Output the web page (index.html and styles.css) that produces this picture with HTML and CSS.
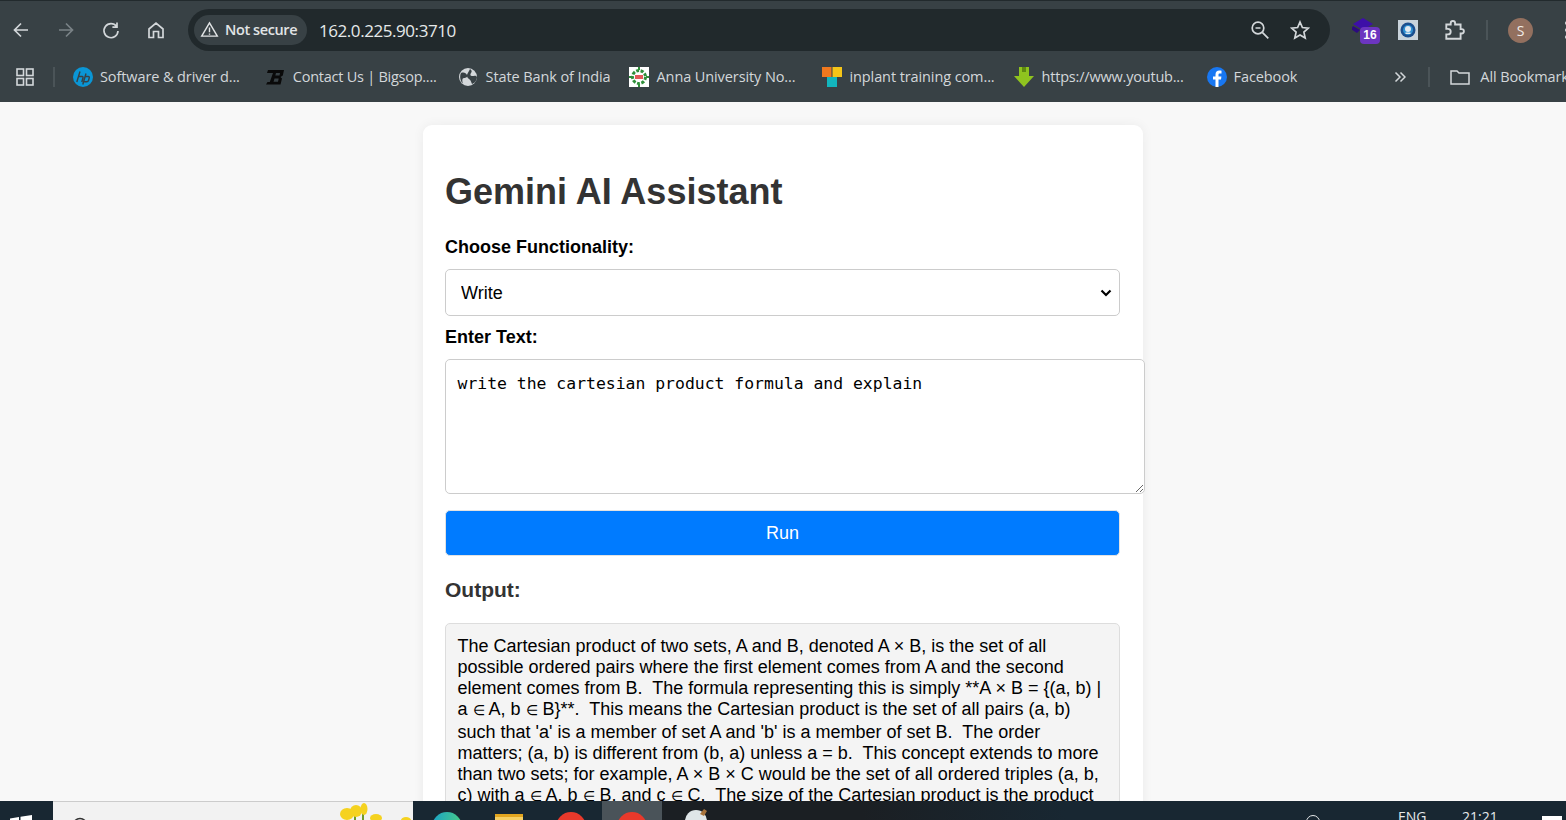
FILE: index.html
```html
<!DOCTYPE html>
<html lang="en">
<head>
<meta charset="utf-8">
<title>Gemini AI Assistant</title>
<link rel="stylesheet" href="styles.css">
</head>
<body>
<header class="browser">
  <div class="toolbar">
    <div class="nav">
      <svg class="ico" viewBox="0 0 20 20"><path d="M17 10H4M10 3.500 3.500 10l6.500 6.500"/></svg>
      <svg class="ico dim" viewBox="0 0 20 20"><path d="M3 10h13M10 3.500l6.500 6.500-6.500 6.500"/></svg>
      <svg class="ico" viewBox="0 0 20 20"><path d="M15.600 6.500A7 7 0 1 0 17 11M16 2.500v4.600h-4.600"/></svg>
      <svg class="ico" viewBox="0 0 20 20"><path d="M3 9 10 3l7 6v8.500h-4.500v-6h-5v6H3z"/></svg>
    </div>
    <div class="omnibox">
      <div class="chip">
        <svg class="warn" viewBox="0 0 20 20"><path d="M10 3 1.800 17h16.400zM10 8v5M10 14.300v1.200"/></svg>
        <span>Not secure</span>
      </div>
      <span class="url">162.0.225.90:3710</span>
      <svg class="ico zoomi" viewBox="0 0 20 20"><circle cx="8" cy="8" r="5.800"/><path d="M5.500 8h5M12.300 12.300l6 6"/></svg>
      <svg class="ico star" viewBox="0 0 20 20"><path d="m10 2 2.400 5.500 6 .6-4.500 4 1.300 5.900L10 15l-5.200 3 1.300-5.900-4.500-4 6-.6z"/></svg>
    </div>
    <div class="actions">
      <div class="ext-stack">
        <svg class="ext-hat" viewBox="0 0 22 18"><path d="M11 0 21 6l-10 6L1 6z" fill="#3d0fa8"/><path d="M1 8l7 4-3 3-6-4z" fill="#2c0a80"/></svg>
        <span class="ext-badge">16</span>
      </div>
      <div class="ext-sq"><svg viewBox="0 0 20 20"><rect width="20" height="20" fill="#c9d3db"/><circle cx="10" cy="10" r="7.500" fill="#1b4f8f"/><circle cx="10" cy="10" r="5" fill="#2f8fd0"/><circle cx="10" cy="9" r="3" fill="#e2e9f0"/><path d="M7.500 12.500h5V14h-5z" fill="#e2e9f0"/></svg></div>
      <svg class="ico puzzle" viewBox="0 0 20 20"><path d="M3 5h4V3.800a2 2 0 0 1 4 0V5h5v4.200h1a2 2 0 0 1 0 4h-1V18H3v-4h1.500a2 2 0 0 0 0-5H3z"/></svg>
      <span class="vsep"></span>
      <span class="avatar">S</span>
      <span class="dots"><i></i><i></i><i></i></span>
    </div>
  </div>
  <nav class="bookmarks">
    <svg class="apps" viewBox="0 0 20 20"><rect x="2" y="2" width="6.500" height="6.500"/><rect x="11.500" y="2" width="6.500" height="6.500"/><rect x="2" y="11.500" width="6.500" height="6.500"/><rect x="11.500" y="11.500" width="6.500" height="6.500"/></svg>
    <span class="vsep first"></span>
    <a class="bm b-hp"><svg viewBox="0 0 20 20"><circle cx="10" cy="10" r="10" fill="#0a96d6"/><path d="M7 4.500 3.800 15M6 9.500h3.200c.8 0 1 .5.800 1.200L8.800 15M13 6.500 9.800 17.500M12.200 9.500h3c1 0 1.300.6 1 1.500l-.7 2.500c-.3.900-.8 1.300-1.700 1.300h-2.500" fill="none" stroke="#384145" stroke-width="1.400"/></svg><span>Software &amp; driver d...</span></a>
    <a class="bm b-big"><svg viewBox="0 0 20 20"><path d="M3 3h16l-1.200 5.500-2.300 1.500 1.500 1.500-1.500 6H1l1.500-2.500h2.300L8 6H2z" fill="#0a0a0a"/><path d="M11 6h4l-.5 2.500h-4.200zM9.500 11.500h4.200l-.7 3.200H8.500z" fill="#384145"/></svg><span>Contact Us | Bigsop....</span></a>
    <a class="bm b-sbi"><svg viewBox="0 0 20 20"><circle cx="10" cy="10" r="9" fill="#d3d7da"/><path d="M3 6c3-1 5 0 6 2s-1 3-3 3-2 3-1 6c-2-2-4-7-2-11zM12 2c2 1 2 3 1 4s-1 3 1 3 4-1 5 1c0 3-2 6-5 7-1-2-1-4-3-5s-2-3-2-4 2-4 3-6z" fill="#384145"/></svg><span>State Bank of India</span></a>
    <a class="bm b-anna"><svg viewBox="0 0 20 20"><rect width="20" height="20" fill="#fff"/><circle cx="10" cy="10" r="6.500" fill="none" stroke="#2f8f3a" stroke-width="3" stroke-dasharray="3 1.500"/><rect x="6" y="8" width="8" height="4" fill="#e25a5a"/><path d="M10 0v3M10 17v3M0 10h3M17 10h3" stroke="#2f8f3a" stroke-width="2"/></svg><span>Anna University No...</span></a>
    <a class="bm b-ipt"><svg viewBox="0 0 20 20"><rect width="9.500" height="10" fill="#f0781e"/><rect x="10.500" width="9.500" height="10" fill="#f5c518"/><rect x="5" y="10" width="10" height="10" fill="#12b5bd"/></svg><span>inplant training com...</span></a>
    <a class="bm b-yt"><svg viewBox="0 0 20 20"><path d="M5 0h10v9h5L10 20 0 9h5z" fill="#8fc31f"/><path d="M8 0h4v5H8z" fill="#5f8a10"/></svg><span>https://www.youtub...</span></a>
    <a class="bm b-fb"><svg viewBox="0 0 20 20"><circle cx="10" cy="10" r="10" fill="#1877f2"/><path d="M11.500 20v-7.500H14l.4-3h-2.900V7.800c0-.9.3-1.400 1.500-1.400h1.500V3.700C14 3.600 13.200 3.500 12.300 3.500 10 3.500 8.500 4.900 8.500 7.400v2.100H6v3h2.500V20z" fill="#fff"/></svg><span>Facebook</span></a>
    <svg class="more" viewBox="0 0 12 12"><path d="M1.500 1.500 6 6l-4.500 4.500M6.500 1.500 11 6l-4.500 4.500"/></svg>
    <span class="vsep second"></span>
    <a class="bm b-all"><svg class="folder" viewBox="0 0 20 20"><path d="M1 4h6l2 2h10v11H1z"/></svg><span>All Bookmarks</span></a>
  </nav>
</header>

<main class="page">
  <section class="card">
    <h1>Gemini AI Assistant</h1>
    <label class="lbl" for="fn">Choose Functionality:</label>
    <select id="fn" class="field-select"><option>Write</option></select>
    <label class="lbl text-lbl" for="tx">Enter Text:</label>
    <textarea id="tx" class="field-text" spellcheck="false">write the cartesian product formula and explain</textarea>
    <button class="run" type="button">Run</button>
    <h2>Output:</h2>
    <div class="output">The Cartesian product of two sets, A and B, denoted A × B, is the set of all possible ordered pairs where the first element comes from A and the second element comes from B.  The formula representing this is simply **A × B = {(a, b) | a <span class="el">∈</span> A, b <span class="el">∈</span> B}**.  This means the Cartesian product is the set of all pairs (a, b) such that 'a' is a member of set A and 'b' is a member of set B.  The order matters; (a, b) is different from (b, a) unless a = b.  This concept extends to more than two sets; for example, A × B × C would be the set of all ordered triples (a, b, c) with a <span class="el">∈</span> A, b <span class="el">∈</span> B, and c <span class="el">∈</span> C.  The size of the Cartesian product is the product</div>
  </section>
</main>

<footer class="taskbar">
  <svg class="win" viewBox="0 0 22 22"><path d="M0 3.500 9 2v8.500H0zM10.500 1.800 22 0v10.500H10.500z" fill="#fff"/></svg>
  <div class="search">
    <svg class="s-ico" viewBox="0 0 20 20"><circle cx="9" cy="9" r="6.500"/></svg>
    <svg class="flower" viewBox="0 0 75 19"><path d="M17 10v9M25 8v11" stroke="#6f9a2a" stroke-width="2"/><g fill="#f5d21f"><ellipse cx="9" cy="11" rx="7" ry="6"/><ellipse cx="18" cy="8" rx="6" ry="6"/><ellipse cx="26" cy="6" rx="3.500" ry="6"/><ellipse cx="38" cy="15" rx="6" ry="4"/><ellipse cx="68" cy="17" rx="5" ry="3"/></g></svg>
  </div>
  <div class="tb-apps">
    <span class="tb-app"><i class="dot edge"></i></span>
    <span class="tb-app"><i class="fold"></i></span>
    <span class="tb-app"><i class="dot chrome"></i></span>
    <span class="tb-app active"><i class="dot chrome"></i></span>
    <span class="tb-app last"><svg class="bird" viewBox="0 0 24 12"><circle cx="11" cy="12" r="11" fill="#dfe6e8"/><path d="M15 5 19 0l3 2-3 5z" fill="#a8743c"/></svg></span>
  </div>
  <div class="tray">
    <i class="t-arc"></i>
    <span class="t-eng">ENG</span>
    <span class="t-time">21:21</span>
    <i class="t-note"></i>
  </div>
</footer>
</body>
</html>
```
FILE: styles.css
```css
* { box-sizing: border-box; }
html, body { height: 100%; margin: 0; }
body {
  display: flex;
  flex-direction: column;
  overflow: hidden;
  background: #f8f8f8;
  font-family: "Liberation Sans", Arial, sans-serif;
  color: #000;
}

/* browser chrome */
.browser { flex: none; height: 102px; background: #384145; border-top: 1px solid #222a2d; overflow: hidden; }
.toolbar { height: 50px; display: flex; align-items: center; padding-top: 8px; }
.nav { width: 188px; padding-left: 11px; display: flex; align-items: center; gap: 25px; flex: none; }
.ico { width: 20px; height: 20px; fill: none; stroke: #d3d7da; stroke-width: 1.700; flex: none; }
.ico.dim { stroke: #7a8286; }
.omnibox {
  flex: none; width: 1142px; height: 42px; border-radius: 21px; background: #21292c;
  display: flex; align-items: center; padding: 0 20px 0 6px; color: #e6e9ea;
}
.chip {
  height: 30px; width: 113px; border-radius: 15px; background: #384145; display: flex; align-items: center;
  gap: 6px; padding: 0 0 2px 6px; font: 600 14.500px "Open Sans", sans-serif; color: #e1e4e5; white-space: nowrap; letter-spacing: -.4px;
}
.warn { width: 19px; height: 19px; fill: none; stroke: #e1e4e5; stroke-width: 1.500; flex: none; }
.url { margin-left: 12px; font: 17px "Open Sans", sans-serif; letter-spacing: -.44px; flex: 1; }
.zoomi { margin-right: 20px; }
.actions { flex: none; display: flex; align-items: center; padding-left: 22px; }
.ext-stack { position: relative; width: 30px; height: 28px; flex: none; }
.ext-hat { position: absolute; left: 0; top: 2px; width: 22px; height: 18px; }
.ext-badge {
  position: absolute; left: 8px; top: 11px; width: 20px; height: 17px; border-radius: 4px; background: #6c35c0;
  color: #fff; font: 700 12px/17px "Liberation Sans", sans-serif; text-align: center;
}
.ext-sq { width: 20px; height: 20px; margin-left: 16px; flex: none; }
.ext-sq svg { display: block; width: 20px; height: 20px; }
.puzzle { margin-left: 25px; width: 22px; height: 22px; }
.vsep { display: block; width: 2px; height: 20px; background: #4b5458; flex: none; }
.actions .vsep { margin-left: 21px; }
.avatar {
  margin-left: 20px; width: 25px; height: 25px; border-radius: 50%; background: #93705f; color: #f2ece8; flex: none;
  font: 14px/25px "Open Sans", sans-serif; text-align: center;
}
.dots { margin-left: 32px; display: flex; flex-direction: column; gap: 3px; flex: none; }
.dots i { display: block; width: 4px; height: 4px; border-radius: 50%; background: #d3d7da; }

.bookmarks { height: 51px; display: flex; align-items: center; padding-left: 15px; white-space: nowrap; color: #d3d7da; }
.apps { width: 20px; height: 20px; fill: none; stroke: #d3d7da; stroke-width: 1.600; flex: none; }
.bookmarks .first { margin-left: 18px; }
.bm { display: flex; align-items: center; gap: 7px; font: 14.500px "Open Sans", sans-serif; letter-spacing: -.1px; flex: none; }
.bm svg { width: 20px; height: 20px; flex: none; }
.b-hp { margin-left: 18px; }
.b-big { margin-left: 25px; gap: 8px; letter-spacing: -.25px; }
.b-sbi { margin-left: 21px; gap: 8px; }
.b-anna { margin-left: 18px; gap: 8px; }
.b-ipt { margin-left: 27px; }
.b-yt { margin-left: 19px; gap: 8px; letter-spacing: -.2px; }
.b-fb { margin-left: 23px; }
.more { width: 12px; height: 12px; margin-left: 97px; fill: none; stroke: #d3d7da; stroke-width: 1.500; flex: none; }
.bookmarks .second { margin-left: 22px; }
.b-all { margin-left: 20px; gap: 10px; }
.bm .folder { fill: none; stroke: #d3d7da; stroke-width: 1.500; }

/* page */
.page { flex: 1; min-height: 0; overflow: hidden; padding-top: 23px; display: flex; flex-direction: column; align-items: center; }
.card {
  flex: none; width: 720px; padding: 22px; background: #fff; border-radius: 9px;
  box-shadow: 0 0 12px rgba(0,0,0,.06); color: #333;
}
h1 { margin: 24px 0 25px; font-size: 36px; line-height: 41px; font-weight: 700; color: #333; }
.lbl { display: block; font-size: 18px; line-height: 20px; font-weight: 700; color: #000; }
.field-select {
  display: block; width: 675px; height: 47px; margin-top: 12px; padding: 0 15px; font: 18px "Liberation Sans", sans-serif; color: #000;
  background: #fff url("data:image/svg+xml,%3Csvg xmlns='http://www.w3.org/2000/svg' viewBox='0 0 12 8'%3E%3Cpath d='M1.500 1.500 6 6l4.500-4.500' fill='none' stroke='%23000' stroke-width='2.200'/%3E%3C/svg%3E") no-repeat right 7px center / 12px 8px;
  border: 1px solid #ccc; border-radius: 5px; appearance: none;
}
.text-lbl { margin-top: 11px; }
.field-text {
  display: block; width: 700px; height: 135px; margin-top: 12px; padding: 13px 11.500px; font: 16.430px/21px "DejaVu Sans Mono", monospace; color: #000;
  background: #fff; border: 1px solid #ccc; border-radius: 5px; resize: both; outline: none;
}
.run {
  display: block; width: 675px; height: 46px; margin-top: 16px; border: 1px solid #e2e2e2; border-radius: 5px; background: #007bff; color: #fff;
  font: 18px "Liberation Sans", sans-serif;
}
h2 { margin: 22px 0 22px; font-size: 21px; line-height: 23px; font-weight: 700; color: #333; }
.output {
  width: 675px; padding: 12px 11.500px; background: #f4f4f4; border: 1px solid #ddd; border-radius: 5px; color: #000;
  font-size: 18px; line-height: 21.120px; white-space: pre-wrap;
}
.el { font-size: 13.500px; }

/* taskbar */
.taskbar {
  flex: none; height: 19px; display: flex; position: relative; overflow: hidden; color: #e6e9ea;
  background: linear-gradient(90deg, #182732 0, #182732 38.500%, #1b1f23 42.500%, #1b1f23 55%, #182732 68%);
}
.win { width: 22px; height: 22px; margin: 14px 0 0 10px; flex: none; }
.search { width: 360px; margin-left: 21px; background: #f2f2f2; border-top: 1px solid #ccc; display: flex; flex: none; }
.s-ico { width: 20px; height: 20px; margin: 14px 0 0 18px; fill: none; stroke: #333; stroke-width: 1.500; flex: none; }
.flower { width: 75px; height: 19px; margin: 1px 0 0 247px; flex: none; }
.tb-apps { display: flex; margin-left: 3px; flex: none; }
.tb-app { width: 62px; display: flex; justify-content: center; flex: none; }
.tb-app.active { background: #4a5359; width: 60px; }
.tb-app.last { width: 70px; }
.dot { display: block; width: 30px; height: 30px; border-radius: 50%; margin-top: 11px; }
.edge { background: linear-gradient(100deg, #19a2c8, #4fd07e); }
.chrome { background: #e8392b; }
.bird { width: 24px; height: 12px; margin-top: 8px; flex: none; }
.fold { display: block; width: 28px; height: 20px; margin-top: 13px; background: #f6cf63; border-top: 3px solid #e2a51f; }
.tray { position: absolute; inset: 0 0 0 auto; width: 300px; }
.t-arc { position: absolute; left: 40px; top: 14px; width: 14px; height: 14px; border: 1.500px solid #e6e9ea; border-radius: 50%; }
.t-eng { position: absolute; left: 132px; top: 6px; font: 14px "Open Sans", sans-serif; }
.t-time { position: absolute; left: 196px; top: 6px; font: 14px "Open Sans", sans-serif; }
.t-note { position: absolute; left: 276px; top: 15px; width: 20px; height: 10px; background: #fff; }
```
